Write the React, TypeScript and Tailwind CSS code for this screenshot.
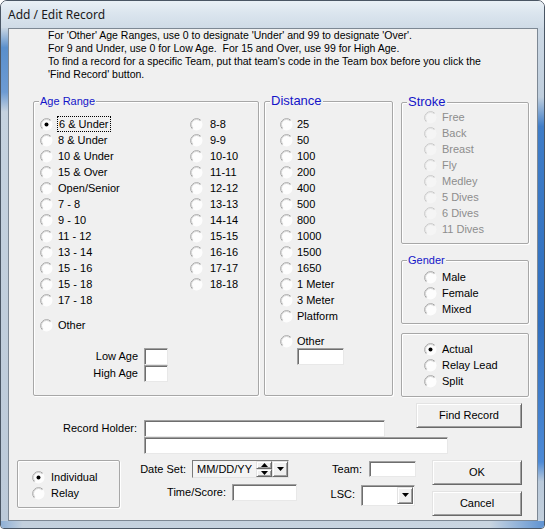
import React from 'react';

const ageLeft = ['6 & Under', '8 & Under', '10 & Under', '15 & Over', 'Open/Senior', '7 - 8', '9 - 10', '11 - 12', '13 - 14', '15 - 16', '15 - 18', '17 - 18'];
const ageRight = ['8-8', '9-9', '10-10', '11-11', '12-12', '13-13', '14-14', '15-15', '16-16', '17-17', '18-18'];
const distances = ['25', '50', '100', '200', '400', '500', '800', '1000', '1500', '1650', '1 Meter', '3 Meter', 'Platform'];
const strokes = ['Free', 'Back', 'Breast', 'Fly', 'Medley', '5 Dives', '6 Dives', '11 Dives'];

// classic win32 look
const sunken = 'bg-white border border-t-[#a0a0a0] border-l-[#a0a0a0] border-r-[#e8e8e8] border-b-[#e8e8e8] shadow-[inset_1px_1px_0_#6e6e6e]';
const raised = 'bg-[#f0f0f0] border border-t-[#e3e3e3] border-l-[#e3e3e3] border-r-[#696969] border-b-[#696969] shadow-[inset_1px_1px_0_#fff,inset_-1px_-1px_0_#a0a0a0]';

function RadioCircle({ checked, disabled }: { checked?: boolean; disabled?: boolean }) {
  return (
    <svg width="13" height="13" viewBox="0 0 13 13" className="shrink-0">
      <circle cx="6.5" cy="6.5" r="6" fill={disabled ? '#f5f5f5' : '#fdfdfd'} />
      <path d="M2.26 10.74A6 6 0 0 1 10.74 2.26" fill="none" stroke={disabled ? '#c6c6c6' : '#a3a3a3'} />
      <path d="M2.96 10.04A5 5 0 0 1 10.04 2.96" fill="none" stroke={disabled ? '#e2e2e2' : '#d2d2d2'} />
      {checked && <circle cx="6.5" cy="6.5" r="2" fill="#000" />}
    </svg>
  );
}

function Radio({ label, checked, disabled, focus, gap = 'ml-[5px]' }: { label: string; checked?: boolean; disabled?: boolean; focus?: boolean; gap?: string }) {
  return (
    <div className="flex items-center h-[16px]">
      <RadioCircle checked={checked} disabled={disabled} />
      <span className={`${gap} leading-[14px] h-[14px] whitespace-nowrap ${disabled ? 'text-[#8d8d8d]' : 'text-black'} ${focus ? 'outline-1 outline-dotted outline-black px-[1px]' : ''}`}>
        {label}
      </span>
    </div>
  );
}

function GroupBox({ title, titleSize = 'text-[11px]', className, children }: { title?: string; titleSize?: string; className: string; children: React.ReactNode }) {
  return (
    <div className={`border border-[#a7a7a7] rounded-[2px] shadow-[inset_1px_1px_0_#fff,1px_1px_0_#fff] ${className}`}>
      {title && (
        <div className={`-mt-[8px] ml-[5px] w-fit px-[1px] h-[14px] leading-[14px] bg-[#f0f0f0] text-[#1414c8] ${titleSize}`}>{title}</div>
      )}
      {children}
    </div>
  );
}

function DownArrow() {
  return (
    <svg width="7" height="4" viewBox="0 0 7 4">
      <path d="M0 0H7L3.5 4Z" fill="#000" />
    </svg>
  );
}

export default function App() {
  return (
    <div className="w-[545px] h-[529px] bg-white font-['Liberation_Sans',Arial,sans-serif] text-[11px] text-black">
      <div className="w-full h-full flex flex-col border border-[#4a5664] rounded-t-[7px] rounded-b-[4px] overflow-hidden">
        {/* title bar */}
        <div className="h-[27px] shrink-0 flex items-center pl-[7px] bg-[linear-gradient(180deg,#e9f0f6_0%,#dbe5ee_45%,#cfdbe7_100%)]">
          <span className="font-['Noto_Sans',sans-serif] text-[12px] text-[#1a1a1a] pt-[1px]">Add / Edit Record</span>
        </div>

        <div className="flex flex-1">
          <div className="w-[7px] bg-[linear-gradient(180deg,#c9d6e3_0%,#5a8fcc_4%,#6d9bd3_13%,#c5d2df_17%,#bccad9_100%)]" />

          {/* client area */}
          <div className="w-[530px] h-[493px] border border-[#7d8894] bg-[#f0f0f0] flex flex-col">
            <div className="pl-[39px] leading-[13px] text-[10.5px]">
              <div>For 'Other' Age Ranges, use 0 to designate 'Under' and 99 to designate 'Over'.</div>
              <div>For 9 and Under, use 0 for Low Age.&nbsp; For 15 and Over, use 99 for High Age.</div>
              <div>To find a record for a specific Team, put that team's code in the Team box before you click the</div>
              <div>'Find Record' button.</div>
            </div>

            {/* group boxes */}
            <div className="flex items-start ml-[24px] mt-[20px]">
              <GroupBox title="Age Range" className="w-[226px] h-[295px]">
                <div className="flex mt-[8px]">
                  <div className="w-[156px] pl-[6px] flex flex-col">
                    {ageLeft.map((a, i) => (
                      <Radio key={a} label={a} checked={i === 0} focus={i === 0} />
                    ))}
                    <div className="mt-[9px]">
                      <Radio label="Other" />
                    </div>
                  </div>
                  <div className="flex flex-col">
                    {ageRight.map((a) => (
                      <Radio key={a} label={a} gap="ml-[7px]" />
                    ))}
                  </div>
                </div>
                <div className="mt-[15px] flex flex-col">
                  <div className="flex items-center">
                    <span className="w-[104px] text-right">Low Age</span>
                    <input type="text" className={`${sunken} ml-[6px] w-[24px] h-[17px]`} />
                  </div>
                  <div className="flex items-center">
                    <span className="w-[104px] text-right">High Age</span>
                    <input type="text" className={`${sunken} ml-[6px] w-[24px] h-[17px]`} />
                  </div>
                </div>
              </GroupBox>

              <GroupBox title="Distance" titleSize="text-[13px]" className="ml-[5px] w-[129px] h-[295px]">
                <div className="mt-[8px] pl-[15px] flex flex-col">
                  {distances.map((d) => (
                    <Radio key={d} label={d} gap="ml-[4px]" />
                  ))}
                  <div className="mt-[9px]">
                    <Radio label="Other" gap="ml-[4px]" />
                  </div>
                  <input type="text" className={`${sunken} ml-[17px] -mt-[1px] w-[47px] h-[17px]`} />
                </div>
              </GroupBox>

              <div className="ml-[8px] w-[128px] flex flex-col">
                <GroupBox title="Stroke" titleSize="text-[13px]" className="mt-[1px] h-[142px]">
                  <div className="pl-[22px] flex flex-col">
                    {strokes.map((s) => (
                      <Radio key={s} label={s} disabled />
                    ))}
                  </div>
                </GroupBox>
                <GroupBox title="Gender" className="mt-[16px] h-[64px]">
                  <div className="mt-[2px] pl-[22px] flex flex-col">
                    <Radio label="Male" />
                    <Radio label="Female" />
                    <Radio label="Mixed" />
                  </div>
                </GroupBox>
                <GroupBox className="mt-[9px] h-[64px] pt-[7px] pl-[22px] flex flex-col">
                  <Radio label="Actual" checked />
                  <Radio label="Relay Lead" />
                  <Radio label="Split" />
                </GroupBox>
              </div>
            </div>

            {/* record holder + find */}
            <div className="mt-[6px] grid grid-cols-[135px_240px_32px_106px] grid-rows-[34px_17px]">
              <div className="self-end h-[17px] leading-[17px] text-right pr-[7px]">Record Holder:</div>
              <input type="text" className={`${sunken} self-end w-[241px] h-[17px]`} />
              <div />
              <button className={`${raised} self-start h-[25px] w-[106px]`}>Find Record</button>
              <div />
              <input type="text" className={`${sunken} col-span-3 w-[304px] h-[17px]`} />
            </div>

            {/* bottom row */}
            <div className="mt-[6px] flex items-start">
              <GroupBox className="ml-[8px] w-[103px] h-[48px] pt-[8px] pl-[14px] flex flex-col">
                <Radio label="Individual" checked gap="ml-[6px]" />
                <Radio label="Relay" gap="ml-[6px]" />
              </GroupBox>

              <div className="w-[177px] flex flex-col">
                <div className="flex items-center h-[18px]">
                  <span className="w-[66px] text-right">Date Set:</span>
                  <div className="ml-[6px] w-[97px] h-[18px] flex items-center border border-t-[#7a7a7a] border-l-[#7a7a7a] border-r-[#e3e3e3] border-b-[#e3e3e3] bg-[#f4f4f4]">
                    <span className="ml-[4px] flex-1 leading-[14px]">MM/DD/YY</span>
                    <div className="w-[16px] h-[16px] flex flex-col">
                      <div className={`${raised} h-[8px] flex items-center justify-center`}>
                        <svg width="7" height="4" viewBox="0 0 7 4"><path d="M0 4H7L3.5 0Z" fill="#000" /></svg>
                      </div>
                      <div className={`${raised} h-[8px] flex items-center justify-center`}>
                        <DownArrow />
                      </div>
                    </div>
                    <div className={`${raised} w-[16px] h-[16px] flex items-center justify-center`}>
                      <DownArrow />
                    </div>
                  </div>
                </div>
                <div className="mt-[6px] flex items-center h-[17px]">
                  <span className="w-[106px] text-right">Time/Score:</span>
                  <input type="text" className={`${sunken} ml-[6px] w-[65px] h-[17px]`} />
                </div>
              </div>

              <div className="w-[119px] flex flex-col items-end">
                <div className="mt-[1px] flex items-center">
                  <span>Team:</span>
                  <input type="text" className={`${sunken} ml-[7px] w-[47px] h-[16px]`} />
                </div>
                <div className="mt-[7px] flex items-center mr-[1px]">
                  <span className="pb-[1px]">LSC:</span>
                  <div className={`${sunken} ml-[6px] w-[54px] h-[21px] flex justify-end items-center pr-[1px]`}>
                    <div className={`${raised} w-[16px] h-[17px] flex items-center justify-center`}>
                      <DownArrow />
                    </div>
                  </div>
                </div>
              </div>

              <div className="ml-[16px] w-[90px] flex flex-col">
                <button className={`${raised} h-[25px]`}>OK</button>
                <button className={`${raised} mt-[6px] h-[25px]`}>Cancel</button>
              </div>
            </div>
          </div>

          <div className="w-[6px] bg-[linear-gradient(180deg,#cdd9e5_0%,#bfcedd_14%,#3f7dc8_20%,#2f6fbf_60%,#4d8ad6_88%,#b9c9da_92%,#c2cfdc_100%)]" />
        </div>

        <div className="h-[7px] shrink-0 bg-[linear-gradient(90deg,#8fb0d6_0%,#c3d0dd_4%,#c9d5e1_90%,#5f93d2_100%)]" />
      </div>
    </div>
  );
}
